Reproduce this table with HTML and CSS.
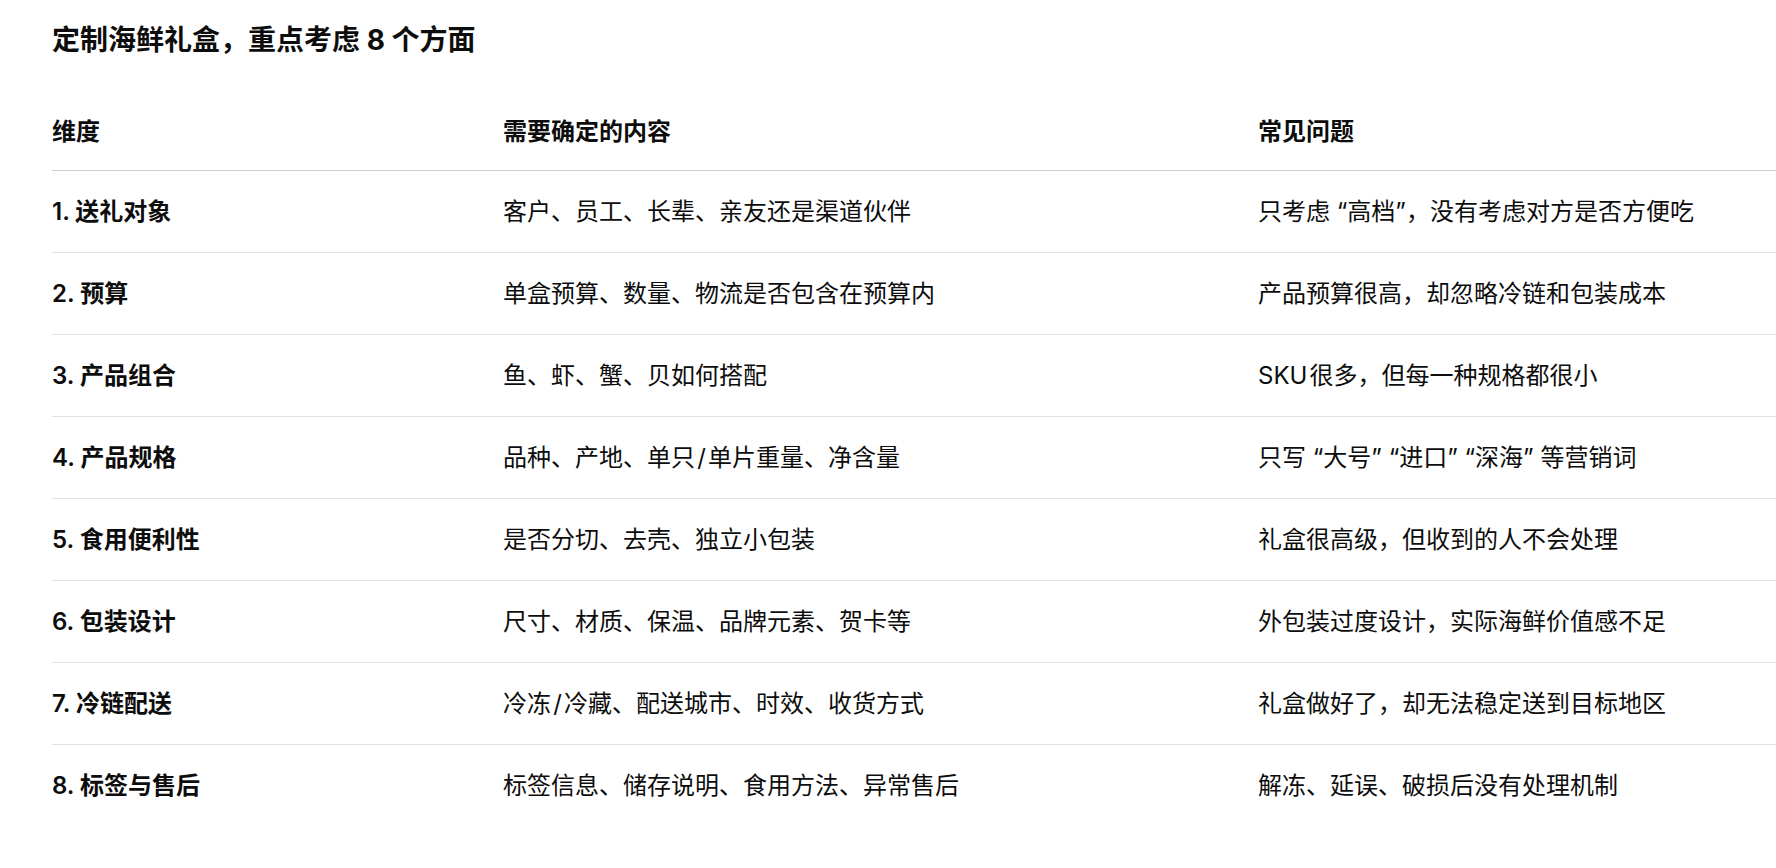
FILE: index.html
```html
<!DOCTYPE html>
<html lang="zh-CN">
<head>
<meta charset="utf-8">
<title>定制海鲜礼盒</title>
<link rel="stylesheet" href="styles.css">
</head>
<body>
<main class="page">
  <h1 class="title">定制海鲜礼盒，重点考虑 8 个方面</h1>
  <table class="grid">
    <colgroup>
      <col class="c1">
      <col class="c2">
      <col class="c3">
    </colgroup>
    <thead>
      <tr><th>维度</th><th>需要确定的内容</th><th>常见问题</th></tr>
    </thead>
    <tbody>
      <tr><td class="dim">1. 送礼对象</td><td>客户、员工、长辈、亲友还是渠道伙伴</td><td>只考虑 “高档”，没有考虑对方是否方便吃</td></tr>
      <tr><td class="dim">2. 预算</td><td>单盒预算、数量、物流是否包含在预算内</td><td>产品预算很高，却忽略冷链和包装成本</td></tr>
      <tr><td class="dim">3. 产品组合</td><td>鱼、虾、蟹、贝如何搭配</td><td>SKU&#8202;很多，但每一种规格都很小</td></tr>
      <tr><td class="dim">4. 产品规格</td><td>品种、产地、单只&#8202;/&#8202;单片重量、净含量</td><td>只写 “大号” “进口” “深海” 等营销词</td></tr>
      <tr><td class="dim">5. 食用便利性</td><td>是否分切、去壳、独立小包装</td><td>礼盒很高级，但收到的人不会处理</td></tr>
      <tr><td class="dim">6. 包装设计</td><td>尺寸、材质、保温、品牌元素、贺卡等</td><td>外包装过度设计，实际海鲜价值感不足</td></tr>
      <tr><td class="dim">7. 冷链配送</td><td>冷冻&#8202;/&#8202;冷藏、配送城市、时效、收货方式</td><td>礼盒做好了，却无法稳定送到目标地区</td></tr>
      <tr><td class="dim">8. 标签与售后</td><td>标签信息、储存说明、食用方法、异常售后</td><td>解冻、延误、破损后没有处理机制</td></tr>
    </tbody>
  </table>
</main>
</body>
</html>
```

FILE: styles.css
```css
html, body {
  margin: 0;
  padding: 0;
  background: #ffffff;
}

body {
  font-family: "Inter", "Noto Sans CJK SC", sans-serif;
  color: #0d0d0d;
  overflow: hidden;
}

.page {
  padding: 20px 0 0 52px;
}

.title {
  margin: 0 0 34px 0;
  font-size: 28px;
  line-height: 40px;
  font-weight: 700;
}

.grid {
  width: 100%;
  border-collapse: collapse;
  table-layout: fixed;
  font-size: 24px;
  line-height: 36px;
}

.c1 { width: 451px; }
.c2 { width: 755px; }

.grid th {
  text-align: left;
  font-weight: 600;
  padding: 20px 0 20px 0;
  border-bottom: 1.5px solid #cfcfcf;
}

.grid td {
  padding: 22.5px 0;
  border-bottom: 1px solid #e3e3e3;
  font-weight: 400;
  white-space: nowrap;
}

.grid tbody tr:last-child td {
  border-bottom: none;
}

.grid td.dim {
  font-weight: 600;
}
```
